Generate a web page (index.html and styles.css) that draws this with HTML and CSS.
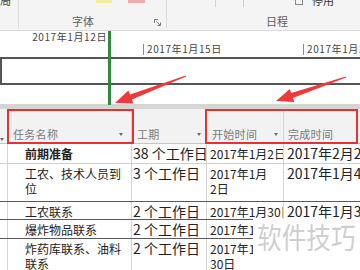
FILE: index.html
```html
<!DOCTYPE html>
<html lang="zh-CN">

<head>
    <meta charset="UTF-8">
    <meta name="viewport" content="width=device-width, initial-scale=1.0">
    <title>项目计划</title>
    <link rel="stylesheet" href="styles.css">
</head>

<body>
    <div id="page">
        <!-- ribbon, bottom part only -->
        <div id="ribbon">
            <div class="grp grp-edit">
                <span class="cut">局</span>
            </div>
            <div class="grp grp-font">
                <div class="swatches">
                    <span class="swatch yellow"></span>
                    <span class="swatch red"></span>
                </div>
                <div class="grp-foot">
                    <span class="grp-label">字体</span>
                    <svg class="launcher" width="7" height="7" viewBox="0 0 7 7">
                        <path d="M0.5 4V0.5H4" stroke="#7a7a7a" fill="none" />
                        <path d="M2.5 2.5L6 6M6.5 3.5V6.5H3.5" stroke="#7a7a7a" fill="none" />
                    </svg>
                </div>
            </div>
            <div class="grp grp-sched">
                <div class="sched-top">
                    <span class="sep first"></span>
                    <span class="sep"></span>
                    <span class="check"></span>
                    <span class="cut">停用</span>
                </div>
                <span class="grp-label">日程</span>
            </div>
        </div>

        <!-- timeline -->
        <div id="timeline">
            <div class="scale-top">2017年1月12日</div>
            <div class="scale-mid">
                <span class="tick">2017年1月15日</span>
                <span class="tick">2017年1月22日</span>
            </div>
            <div class="bar"></div>
            <div class="today"></div>
        </div>

        <div class="splitter"></div>

        <!-- task sheet -->
        <div id="sheet">
            <div class="row head">
                <div class="cell"><div class="hc"><span class="dd"></span></div></div>
                <div class="cell c-name"><div class="hc"><span>任务名称</span><span class="dd"></span></div></div>
                <div class="cell c-dur"><div class="hc"><span>工期</span><span class="dd"></span></div></div>
                <div class="cell c-start"><div class="hc"><span>开始时间</span><span class="dd"></span></div></div>
                <div class="cell c-fin"><div class="hc"><span>完成时间</span></div></div>
            </div>
            <div class="row r1">
                <div class="cell"></div>
                <div class="cell c-name summary">前期准备</div>
                <div class="cell c-dur">38 个工作日</div>
                <div class="cell c-start">2017年1月2日</div>
                <div class="cell c-fin">2017年2月28日</div>
            </div>
            <div class="row r2 dark">
                <div class="cell"></div>
                <div class="cell c-name">工农、技术人员到<br>位</div>
                <div class="cell c-dur">3 个工作日</div>
                <div class="cell c-start">2017年1月<br>2日</div>
                <div class="cell c-fin">2017年1月4日</div>
            </div>
            <div class="row r3 dark">
                <div class="cell"></div>
                <div class="cell c-name">工农联系</div>
                <div class="cell c-dur">2 个工作日</div>
                <div class="cell c-start">2017年1月30日</div>
                <div class="cell c-fin">2017年1月31日</div>
            </div>
            <div class="row r4 dark">
                <div class="cell"></div>
                <div class="cell c-name">爆炸物品联系</div>
                <div class="cell c-dur">2 个工作日</div>
                <div class="cell c-start"><span class="clip">2017年1月30日</span></div>
                <div class="cell c-fin"></div>
            </div>
            <div class="row r5">
                <div class="cell"></div>
                <div class="cell c-name">炸药库联系、油料<br>联系</div>
                <div class="cell c-dur">2 个工作日</div>
                <div class="cell c-start"><span class="clip">2017年1月<br>30日</span></div>
                <div class="cell c-fin"></div>
            </div>

            <div class="mark mark-name"></div>
            <div class="mark mark-date"></div>
            <div class="watermark"><span>软件技巧</span></div>
        </div>

        <svg class="arrows" width="360" height="270" viewBox="0 0 360 270">
            <polygon fill="#ee3a3a"
                points="115,103 133.4,103.5 131.8,99.4 186.2,76.6 185.8,75.4 130,94.5 128.4,90.4" />
            <polygon fill="#ee3a3a"
                points="276,101 294.4,102.1 292.9,98 346.2,77.6 345.8,76.4 291.2,93 289.8,88.9" />
        </svg>
    </div>
</body>

</html>
```

FILE: styles.css
```css
* {
    box-sizing: border-box;
}

body {
    margin: 0;
    font-family: "Noto Sans CJK SC", "Noto Sans", sans-serif;
    color: #222;
}

#page {
    position: relative;
    width: 360px;
    height: 270px;
    overflow: hidden;
    background: #fff;
}

/* ribbon */
#ribbon {
    display: flex;
    height: 31px;
    background: #f4f4f4;
    border-bottom: 1px solid #d9d9d9;
}

.grp {
    flex-shrink: 0;
    height: 28px;
    border-right: 1px solid #dcdcdc;
}

.grp-edit {
    width: 19px;
}

.grp-font {
    display: flex;
    flex-direction: column;
    justify-content: space-between;
    width: 148px;
}

.grp-sched {
    display: flex;
    flex-direction: column;
    justify-content: space-between;
    align-items: center;
    width: 220px;
    border-right: none;
}

.cut {
    display: block;
    margin-top: -6px;
    font-size: 11px;
    line-height: 12px;
    color: #444;
}

.swatches {
    display: flex;
    gap: 16px;
    padding-left: 77px;
}

.swatch {
    width: 16px;
    height: 3px;
}

.swatch.yellow {
    background: #f3eea2;
}

.swatch.red {
    width: 17px;
    background: #f2abab;
}

.grp-foot {
    display: flex;
    align-items: center;
    padding-left: 53px;
    padding-right: 5px;
}

.grp-label {
    font-size: 11px;
    line-height: 13px;
    color: #5f5f5f;
}

.launcher {
    margin-left: auto;
    margin-top: 2px;
}

.sched-top {
    display: flex;
    align-items: flex-start;
    align-self: stretch;
}

.sep {
    width: 1px;
    height: 7px;
    margin-left: 27px;
    background: #d0d0d0;
}

.sep.first {
    margin-left: 48px;
}

.check {
    width: 8px;
    height: 5px;
    margin-left: 51px;
    border: 1px solid #888;
    border-top: none;
}

.sched-top .cut {
    margin-left: 9px;
    color: #333;
}

/* timeline */
#timeline {
    position: relative;
    height: 73px;
    font-size: 10px;
    letter-spacing: .6px;
    color: #444;
}

.scale-top {
    width: 107px;
    line-height: 11px;
    text-align: right;
}

.scale-mid {
    display: flex;
    margin-top: 2px;
    padding-left: 143px;
}

.tick {
    flex-shrink: 0;
    width: 160px;
    height: 11px;
    padding-left: 3px;
    border-left: 1px solid #8a8a8a;
    line-height: 10px;
}

.bar {
    width: 420px;
    height: 28px;
    margin-top: 2px;
    border: 2px solid #555;
}

.today {
    position: absolute;
    left: 108px;
    top: 0;
    width: 3px;
    height: 74px;
    background: #2f8a3c;
}

.splitter {
    height: 5px;
    background: #d5d5d5;
}

/* sheet */
#sheet {
    position: relative;
}

.row {
    display: grid;
    grid-template-columns: 8px 124px 75px 77px 140px;
    width: 424px;
    border-bottom: 1px solid #d0d0d0;
}

.row.dark {
    border-bottom-color: #5a5a5a;
}

.cell {
    overflow: hidden;
    padding-top: 2px;
    border-right: 1px solid #d4d4d4;
    line-height: 15px;
    white-space: nowrap;
}

.r1 { height: 20px; }
.r2 { height: 38px; }
.r3 { height: 18px; }
.r4 { height: 19px; }
.r5 { height: 40px; }

.c-name {
    padding-left: 17px;
    font-size: 12px;
}

.c-name.summary {
    font-weight: bold;
}

.c-dur {
    padding-left: 1px;
    font-size: 14px;
}

.c-start {
    padding-left: 3px;
    font-size: 12px;
}

.c-fin {
    padding-left: 3px;
    font-size: 14px;
}

/* start dates half hidden under the watermark */
.clip {
    display: inline-block;
    width: 43px;
    overflow: hidden;
    vertical-align: top;
}

.head {
    height: 35px;
    background: #f2f2f2;
    border-bottom-color: #c4c4c4;
}

.head .cell {
    display: flex;
    align-items: flex-end;
    padding: 0 0 2px 0;
    border-right-color: #d6d6d6;
    font-size: 11px;
    letter-spacing: .3px;
    color: #7a7a7a;
}

.hc {
    display: flex;
    align-items: center;
    justify-content: space-between;
    width: 100%;
    line-height: 14px;
}

.head .c-name { padding-left: 5px; padding-right: 8px; }
.head .c-dur { padding-left: 5px; padding-right: 5px; }
.head .c-start { padding-left: 5px; padding-right: 5px; }
.head .c-fin { padding-left: 4px; }

.dd {
    width: 0;
    height: 0;
    border-left: 2.5px solid transparent;
    border-right: 2.5px solid transparent;
    border-top: 3px solid #6a6a6a;
}

/* annotations */
.mark {
    position: absolute;
    top: 0;
    height: 35px;
    border: 2px solid #e63232;
}

.mark-name {
    left: 7px;
    width: 127px;
}

.mark-date {
    left: 205px;
    width: 153px;
}

.watermark {
    position: absolute;
    left: 253px;
    top: 110px;
    width: 110px;
    height: 60px;
    padding: 3px 0 0 4px;
    background: #fff;
    font-size: 29px;
    line-height: 29px;
    color: #cfcfcf;
    white-space: nowrap;
}

.watermark span {
    display: inline-block;
    transform: scaleX(.85);
    transform-origin: left top;
}

.arrows {
    position: absolute;
    left: 0;
    top: 0;
    pointer-events: none;
}
```
